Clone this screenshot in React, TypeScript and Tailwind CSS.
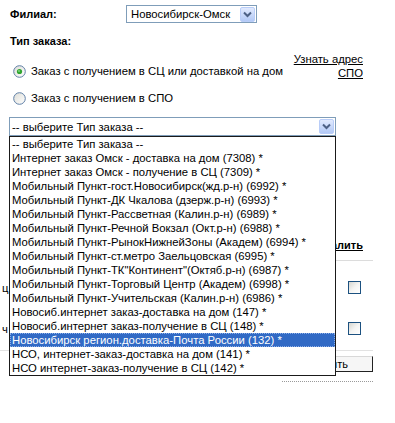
const options = [
  "-- выберите Тип заказа --",
  "Интернет заказ Омск - доставка на дом (7308) *",
  "Интернет заказ Омск - получение в СЦ (7309) *",
  "Мобильный Пункт-гост.Новосибирск(жд.р-н) (6992) *",
  "Мобильный Пункт-ДК Чкалова (дзерж.р-н) (6993) *",
  "Мобильный Пункт-Рассветная (Калин.р-н) (6989) *",
  "Мобильный Пункт-Речной Вокзал (Окт.р-н) (6988) *",
  "Мобильный Пункт-РынокНижнейЗоны (Академ) (6994) *",
  "Мобильный Пункт-ст.метро Заельцовская (6995) *",
  "Мобильный Пункт-ТК\"Континент\"(Октяб.р-н) (6987) *",
  "Мобильный Пункт-Торговый Центр (Академ) (6998) *",
  "Мобильный Пункт-Учительская (Калин.р-н) (6986) *",
  "Новосиб.интернет заказ-доставка на дом (147) *",
  "Новосиб.интернет заказ-получение в СЦ (148) *",
  "Новосибирск регион.доставка-Почта России (132) *",
  "НСО, интернет-заказ-доставка на дом (141) *",
  "НСО интернет-заказ-получение в СЦ (142) *",
];

const selectedIndex = 14;

function ArrowButton() {
  return (
    <div className="flex h-[15px] w-[15px] shrink-0 items-center justify-center rounded-[2px] border border-[#b9cdf8] bg-gradient-to-b from-[#e1eafe] to-[#b3c9f6]">
      <svg width="9" height="7" viewBox="0 0 9 7">
        <path d="M1 1.5 L4.5 5 L8 1.5" fill="none" stroke="#4d6185" strokeWidth="2" />
      </svg>
    </div>
  );
}

function Radio({ checked }: { checked?: boolean }) {
  return (
    <svg width="13" height="13" viewBox="0 0 13 13" className="shrink-0">
      <defs>
        <linearGradient id="rg" x1="0" y1="0" x2="1" y2="1">
          <stop offset="0" stopColor="#dcdcd6" />
          <stop offset="1" stopColor="#ffffff" />
        </linearGradient>
      </defs>
      <circle cx="6.5" cy="6.5" r="5.8" fill="url(#rg)" stroke="#5f7fa6" strokeWidth="1" />
      {checked && <circle cx="6.5" cy="6.5" r="2.6" fill="#2fa52f" />}
      {checked && <circle cx="6" cy="6" r="1" fill="#7fd67f" />}
    </svg>
  );
}

function Checkbox() {
  return (
    <div className="h-[13px] w-[13px] border border-[#1c5180] bg-gradient-to-br from-[#d6d6d0] via-[#f4f4f2] to-white" />
  );
}

export default function App() {
  return (
    <div className="relative h-[423px] w-[395px] overflow-hidden whitespace-nowrap bg-white font-['Liberation_Sans',Arial,sans-serif] text-[11.3px] leading-[14px] text-black">
      <div className="pl-[10px] pt-[5px]">
        <div className="flex h-[18px] items-center">
          <span className="w-[116px] text-[11px] font-bold">Филиал:</span>
          <div className="flex h-[18px] w-[131px] items-center border border-[#7f9db9] pl-[4px] pr-[1px]">
            <span className="flex-1">Новосибирск-Омск</span>
            <ArrowButton />
          </div>
        </div>

        <div className="mt-[11px] text-[11px] font-bold">Тип заказа:</div>

        <div className="mt-[4px] flex w-[353px] items-end justify-between">
          <label className="flex items-center gap-[5px] pb-[2px] pl-[3px]">
            <Radio checked />
            <span>Заказ с получением в СЦ или доставкой на дом</span>
          </label>
          <a className="text-right underline">
            Узнать адрес
            <br />
            СПО
          </a>
        </div>

        <label className="mt-[11px] flex items-center gap-[5px] pl-[3px]">
          <Radio />
          <span>Заказ с получением в СПО</span>
        </label>

        <div className="-ml-[1px] mt-[12px] flex h-[19px] w-[327px] items-center border border-[#7f9db9] pl-[2px] pr-[1px]">
          <span className="flex-1">-- выберите Тип заказа --</span>
          <ArrowButton />
        </div>
      </div>

      {/* table behind the open list */}
      <div className="w-[373px]">
        <div className="mt-[102px] flex justify-end pr-[10px]">
          <span className="text-[11px] font-bold underline">Удалить</span>
        </div>
        <div className="ml-auto mt-[8px] h-px w-[60px] bg-[#dcdcdc]" />
        <div className="mt-[20px] flex h-[13px] items-center justify-between pr-[12px]">
          <span className="pl-[2px]">ц</span>
          <Checkbox />
        </div>
        <div className="mt-[28px] flex h-[13px] items-center justify-between pr-[12px]">
          <span className="pl-[2px]">ч</span>
          <Checkbox />
        </div>
        <div className="mt-[15px] h-px w-full bg-[#e2e2e2]" />
        <div className="mt-[5px] flex justify-end">
          <button className="flex h-[16px] w-[90px] items-center justify-end border border-[#d8d8d8] border-b-[#222] border-r-[#222] bg-[#f6f6f6] pr-[24px] font-['Liberation_Sans',Arial,sans-serif] text-[11px]">
            Сохранить
          </button>
        </div>
        <div className="ml-auto mt-[9px] w-[91px] border-t border-dotted border-[#9a9a9a]" />
      </div>

      {/* open dropdown list */}
      <div className="absolute left-[9px] top-[136px] w-[327px] border border-[#1a1a1a] bg-white">
        {options.map((o, i) => (
          <div
            key={o}
            className={
              i === selectedIndex
                ? "h-[14px] border border-dotted border-[#8fb0e8] bg-[#316ac5] pl-[1px] leading-[12px] text-white"
                : "h-[14px] pl-[2px]"
            }
          >
            {o}
          </div>
        ))}
      </div>
    </div>
  );
}
